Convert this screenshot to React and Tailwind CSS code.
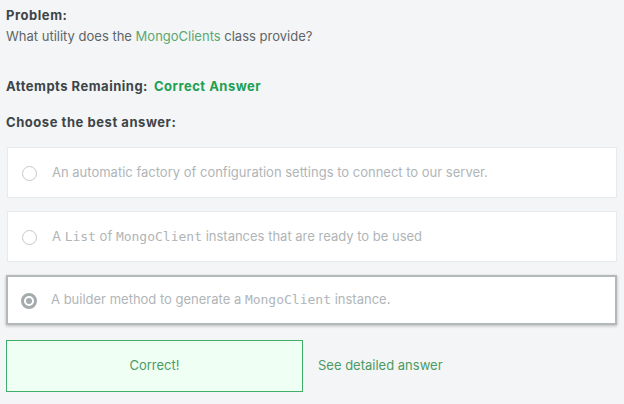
export default function App() {
  const mono = "font-['DejaVu_Sans_Mono',monospace] text-[13px]";
  return (
    <div className="w-[624px] h-[404px] bg-[#f4f5f7] overflow-hidden font-['Inter','Liberation_Sans',sans-serif] text-[13px]">
      <div className="pt-[7px] px-[6px]">
        <div className="font-bold tracking-[0.55px] text-[#3d4548] leading-[16px]">Problem:</div>
        <div className="text-[#5d6568] leading-[16px] mt-[5px]">
          What utility does the <span className="text-[#5aa871]">MongoClients</span> class provide?
        </div>
        <div className="mt-[34px] flex gap-[6px] leading-[16px] font-bold tracking-[0.5px]">
          <span className="text-[#3d4548]">Attempts Remaining:</span>
          <span className="text-[#21a052]">Correct Answer</span>
        </div>
        <div className="mt-[20px] font-bold tracking-[0.55px] text-[#3d4548] leading-[16px]">Choose the best answer:</div>
      </div>
      <div className="mt-[17px] pl-[7px] pr-[7px] flex flex-col">
        <div className="h-[51px] bg-white border border-[#e6eaeb] flex items-center text-[#b0b5b8]">
          <span className="ml-[14px] w-[15px] h-[15px] rounded-full border border-[#c5cacc] mt-[2px]"></span>
          <span className="ml-[15px]">An automatic factory of configuration settings to connect to our server.</span>
        </div>
        <div className="mt-[13px] h-[51px] bg-white border border-[#e6eaeb] flex items-center text-[#b0b5b8]">
          <span className="ml-[14px] w-[15px] h-[15px] rounded-full border border-[#c5cacc] mt-[2px]"></span>
          <span className="ml-[15px]">
            A <span className={mono}>List</span> of <span className={mono}>MongoClient</span> instances that are ready to be used
          </span>
        </div>
        <div className="mt-[13px] -ml-[1px] h-[50px] bg-white border-2 border-[#b3b8bb] shadow-[0_1px_3px_rgba(0,0,0,0.25)] flex items-center text-[#b0b5b8]">
          <span className="ml-[13px] w-[16px] h-[16px] rounded-full border-[3px] border-[#a5aaad] mt-[2px] flex items-center justify-center">
            <span className="w-[6px] h-[6px] rounded-full bg-[#a5aaad]"></span>
          </span>
          <span className="ml-[14px]">
            A builder method to generate a <span className={mono}>MongoClient</span> instance.
          </span>
        </div>
      </div>
      <div className="mt-[15px] pl-[6px] flex items-center">
        <div className="w-[297px] h-[52px] border border-[#3fae69] bg-[#effff4] flex items-center justify-center text-[#4c9a63]">
          Correct!
        </div>
        <span className="ml-[15px] text-[#4c9a63]">See detailed answer</span>
      </div>
    </div>
  );
}
